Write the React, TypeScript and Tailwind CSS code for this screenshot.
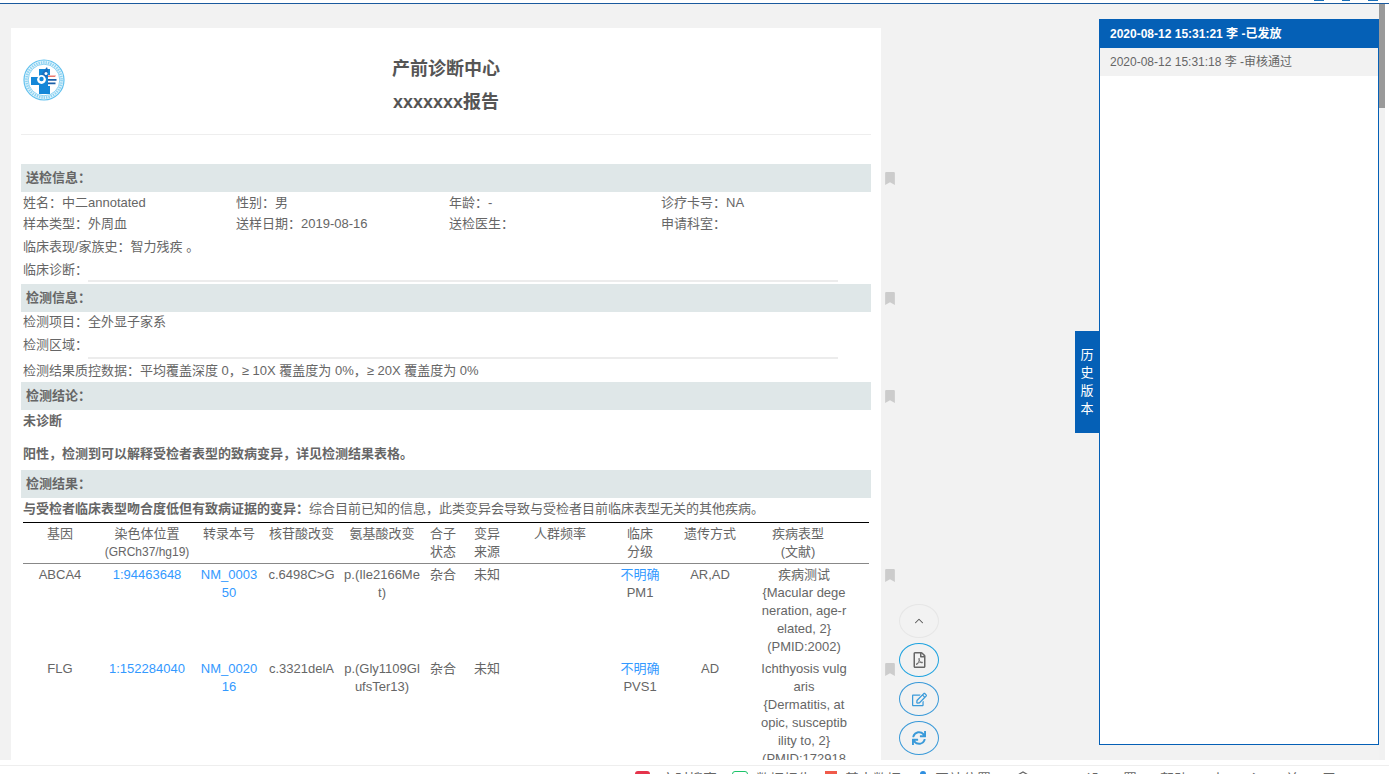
import { FaBookmark, FaRegFilePdf, FaRegEdit, FaSync } from "react-icons/fa";
import { ChevronUp } from "lucide-react";

const Mark = ({ cls }: { cls: string }) => (
  <FaBookmark className={`absolute text-[#cccccc] w-[10px] h-[13px] ${cls}`} />
);

const Head = ({ t, cls }: { t: string; cls: string }) => (
  <div className="relative h-[28px] bg-[#dfe7e8] pl-[5px] leading-[27px] font-bold">
    {t}
    <Mark cls={cls} />
  </div>
);

const Logo = () => (
  <svg width="42" height="42" viewBox="0 0 42 42">
    <circle cx="21" cy="21" r="20" fill="#e4f5fc" stroke="#62c1ee" strokeWidth="1.2" />
    <circle cx="21" cy="21" r="17.6" fill="none" stroke="#8fd3f2" strokeWidth="2.6" strokeDasharray="1.4 1" />
    <circle cx="21" cy="21" r="15.8" fill="#ffffff" stroke="#62c1ee" strokeWidth="0.7" />
    <path d="M16 10h11v8h7v8h-7v9H16v-9H8v-8h8z" fill="#1487d8" />
    <path d="M24 8c1 3 2 6 0 11l-6-3c2-3 4-6 6-8z" fill="#1b6fc0" />
    <path d="M25 16h9v11h-9z" fill="#ffffff" />
    <circle cx="18.5" cy="20.5" r="4.4" fill="#ffffff" />
    <circle cx="18.5" cy="20" r="2.2" fill="#1487d8" />
    <circle cx="23" cy="14.5" r="1.5" fill="#ffffff" />
    <path d="M25 16.5h8l-1 1.6h-7z" fill="#e9796f" />
    <path d="M25 20h8.5v1.8H25zM25 23.4h7.5v1.8H25z" fill="#1b5fa8" />
  </svg>
);

const Rule = () => <div className="h-[2px] ml-[67px] mr-[33px] bg-[#ececec]" />;

const Row = ({ items, cls }: { items: string[]; cls: string }) => (
  <div className={`grid grid-cols-[213px_213px_212px_1fr] h-[22px] pl-[2px] ${cls}`}>
    {items.map((t, i) => (
      <div key={i}>{t}</div>
    ))}
  </div>
);

const th = "align-top font-normal pt-[2px] px-[2px] pb-[2px]";
const td = "align-top px-[2px] pt-[2px] break-all";
const link = "text-[#3399ff]";

const FootItem = ({ icon, t, cls, gap }: { icon: React.ReactNode; t: string; cls: string; gap: string }) => (
  <div className={`flex items-start ${gap} ${cls}`}>
    {icon}
    <span>{t}</span>
  </div>
);

export default function App() {
  return (
    <div
      className="relative h-[774px] w-full overflow-hidden bg-white text-[13px] text-[#666666] flex flex-col"
      style={{ fontFamily: '"Liberation Sans","Noto Sans CJK SC",sans-serif' }}
    >
      {/* top bar */}
      <div className="h-[4px] shrink-0 border-b border-[#1a5a9e] bg-white flex justify-end gap-[18px] pr-[11px] overflow-hidden">
        <span className="block w-[10px] h-[1px] bg-[#1a6fb8]" />
        <span className="block w-[8px] h-[1px] bg-[#1a6fb8]" />
        <span className="block w-[10px] h-[1px] bg-[#1a6fb8]" />
      </div>

      {/* main */}
      <div className="relative h-[756px] shrink-0 bg-[#f2f2f2] overflow-hidden w-[1385px] pt-[24px] pl-[11px]">
        <div className="w-[870px] bg-white px-[10px] pb-[40px]">
          {/* title */}
          <div className="relative h-[107px] border-b border-[#eeeeee] pt-[25px] text-center text-[18px] leading-[33px] font-bold text-[#555555]">
            <div className="absolute left-[2px] top-[31px]">
              <Logo />
            </div>
            <div>产前诊断中心</div>
            <div>xxxxxxx报告</div>
          </div>

          <div className="h-[29px]" />
          <Head t="送检信息：" cls="left-[864px] top-[8px]" />
          <Row cls="leading-[21px]" items={["姓名：中二annotated", "性别：男", "年龄：-", "诊疗卡号：NA"]} />
          <Row cls="leading-[20px]" items={["样本类型：外周血", "送样日期：2019-08-16", "送检医生：", "申请科室："]} />
          <div className="h-[22px] leading-[21px] pl-[2px]">临床表现/家族史：智力残疾 。</div>
          <div className="h-[22px] leading-[23px] pl-[2px]">临床诊断：</div>
          <Rule />
          <div className="h-[2px]" />

          <Head t="检测信息：" cls="left-[864px] top-[8px]" />
          <div className="h-[22px] leading-[20px] pl-[2px]">检测项目：全外显子家系</div>
          <div className="h-[23px] leading-[21px] pl-[2px]">检测区域：</div>
          <Rule />
          <div className="h-[23px] leading-[23px] pl-[2px]">检测结果质控数据：平均覆盖深度 0，≥ 10X 覆盖度为 0%，≥ 20X 覆盖度为 0%</div>

          <Head t="检测结论：" cls="left-[864px] top-[8px]" />
          <div className="h-[33px] leading-[21px] pl-[2px] font-bold">未诊断</div>
          <div className="h-[27px] leading-[21px] pl-[2px] font-bold">阳性，检测到可以解释受检者表型的致病变异，详见检测结果表格。</div>

          <Head t="检测结果：" cls="invisible" />
          <div className="h-[24px] leading-[21px] pl-[2px]">
            <b>与受检者临床表型吻合度低但有致病证据的变异：</b>综合目前已知的信息，此类变异会导致与受检者目前临床表型无关的其他疾病。
          </div>

          <table className="ml-[2px] w-[846px] table-fixed border-collapse border-t border-black text-center leading-[18px]">
            <colgroup>
              <col className="w-[74px]" />
              <col className="w-[100px]" />
              <col className="w-[64px]" />
              <col className="w-[81px]" />
              <col className="w-[80px]" />
              <col className="w-[42px]" />
              <col className="w-[46px]" />
              <col className="w-[100px]" />
              <col className="w-[60px]" />
              <col className="w-[80px]" />
              <col />
            </colgroup>
            <thead>
              <tr className="border-b border-[#888888]">
                <th className={th}>基因</th>
                <th className={th}>
                  染色体位置
                  <br />
                  <span className="text-[12px]">(GRCh37/hg19)</span>
                </th>
                <th className={th}>转录本号</th>
                <th className={th}>核苷酸改变</th>
                <th className={th}>氨基酸改变</th>
                <th className={th}>合子<br />状态</th>
                <th className={th}>变异<br />来源</th>
                <th className={th}>人群频率</th>
                <th className={th}>临床<br />分级</th>
                <th className={th}>遗传方式</th>
                <th className="align-top font-normal pt-[2px] pb-[2px] pr-[23px]">疾病表型<br />(文献)</th>
              </tr>
            </thead>
            <tbody>
              <tr className="h-[94px]">
                <td className={td}>ABCA4</td>
                <td className={`${td} ${link}`}>1:94463648</td>
                <td className={`${td} ${link}`}>NM_000350</td>
                <td className={td}>c.6498C&gt;G</td>
                <td className={td}>p.(Ile2166Met)</td>
                <td className={td}>杂合</td>
                <td className={td}>未知</td>
                <td className={td}></td>
                <td className={td}>
                  <span className={link}>不明确</span>
                  <br />
                  PM1
                </td>
                <td className={td}>AR,AD</td>
                <td className="relative align-top pt-[2px] pl-[10px] pr-[21px] break-all">
                  疾病测试
                  <br />
                  {"{Macular degeneration, age-related, 2}"}
                  <br />
                  (PMID:2002)
                  <Mark cls="left-[135px] top-[5px]" />
                </td>
              </tr>
              <tr>
                <td className={td}>FLG</td>
                <td className={`${td} ${link}`}>1:152284040</td>
                <td className={`${td} ${link}`}>NM_002016</td>
                <td className={td}>c.3321delA</td>
                <td className={td}>p.(Gly1109GlufsTer13)</td>
                <td className={td}>杂合</td>
                <td className={td}>未知</td>
                <td className={td}></td>
                <td className={td}>
                  <span className={link}>不明确</span>
                  <br />
                  PVS1
                </td>
                <td className={td}>AD</td>
                <td className="relative align-top pt-[2px] pl-[10px] pr-[21px] break-all">
                  Ichthyosis vulgaris
                  <br />
                  {"{Dermatitis, atopic, susceptibility to, 2}"}
                  <br />
                  (PMID:17291859)
                  <Mark cls="left-[135px] top-[5px]" />
                </td>
              </tr>
            </tbody>
          </table>
        </div>

        {/* floating buttons */}
        <div className="absolute left-[899px] top-[600px] flex flex-col gap-[5px]">
          <button className="flex h-[34px] w-[40px] items-center justify-center rounded-[50%] border border-[#e6e6e6] text-[#555555]">
            <ChevronUp className="h-[14px] w-[14px]" strokeWidth={1.8} />
          </button>
          <button className="flex h-[34px] w-[40px] items-center justify-center rounded-[50%] border border-[#1fa3e0] text-[#666666]">
            <FaRegFilePdf className="h-[16px] w-[13px]" />
          </button>
          <button className="flex h-[34px] w-[40px] items-center justify-center rounded-[50%] border border-[#3a9ad9] text-[#3a9ad9]">
            <FaRegEdit className="h-[15px] w-[15px]" />
          </button>
          <button className="flex h-[34px] w-[40px] items-center justify-center rounded-[50%] border border-[#3a9ad9] text-[#3a9ad9]">
            <FaSync className="h-[14px] w-[14px]" />
          </button>
        </div>

        {/* history drawer */}
        <div className="absolute left-[1075px] top-[327px] flex h-[102px] w-[24px] flex-col items-center justify-center bg-[#0560b6] leading-[18px] text-white">
          <span>历</span>
          <span>史</span>
          <span>版</span>
          <span>本</span>
        </div>
        <div className="absolute left-[1099px] top-[15px] h-[726px] w-[280px] border border-[#0560b6] bg-white">
          <div className="h-[28px] bg-[#0560b6] pl-[10px] text-[12px] font-bold leading-[28px] text-white">
            2020-08-12 15:31:21 李 -已发放
          </div>
          <div className="h-[28px] bg-[#f2f2f2] pl-[10px] text-[12px] leading-[28px]">
            2020-08-12 15:31:18 李 -审核通过
          </div>
        </div>

        {/* scrollbar */}
        <div className="absolute left-[1379px] top-0 h-full w-[6px] bg-[#f1f1f1]">
          <div className="h-[104px] bg-[#9a9a9a]" />
        </div>
      </div>

      {/* footer */}
      <div className="h-[5px] shrink-0 bg-white" />
      <div className="flex-1 border-t border-[#eeeeee] bg-white pt-[6px] pl-[635px] overflow-hidden">
        <div className="flex text-[14px] leading-[14px] whitespace-nowrap">
          <FootItem
            cls="w-[97px]"
            gap="gap-[11px]"
            icon={<span className="-mt-[1px] block h-[12px] w-[15px] rounded-[3px] bg-[#e5334b]" />}
            t="实时搜索"
          />
          <FootItem
            cls="w-[93px]"
            gap="gap-[8px]"
            icon={<span className="-mt-[1px] block h-[12px] w-[16px] rounded-[3px] border border-[#1cc46a] bg-white" />}
            t="数据报告"
          />
          <FootItem
            cls="w-[95px]"
            gap="gap-[8px]"
            icon={<span className="-mt-[1px] block h-[12px] w-[12px] bg-[#f05a4a]" />}
            t="基本数据"
          />
          <FootItem
            cls="w-[95px]"
            gap="gap-[9px]"
            icon={<span className="-mt-[1px] block h-[12px] w-[6px] rounded-t-full bg-[#2f8fe0]" />}
            t="网站位置"
          />
          <FootItem
            cls="w-[34px]"
            gap="gap-0"
            icon={
              <svg width="16" height="12" viewBox="0 0 16 12" className="-mt-[1px]">
                <path d="M1 5l7-4 7 4v7H1z" fill="none" stroke="#666666" strokeWidth="1.2" />
              </svg>
            }
            t=""
          />
          <div className="flex gap-[23px]">
            <span>工</span>
            <span>设</span>
            <span>置</span>
            <span>帮助</span>
            <span>中</span>
            <span>心</span>
            <span>关</span>
            <span>于</span>
          </div>
        </div>
      </div>
    </div>
  );
}
